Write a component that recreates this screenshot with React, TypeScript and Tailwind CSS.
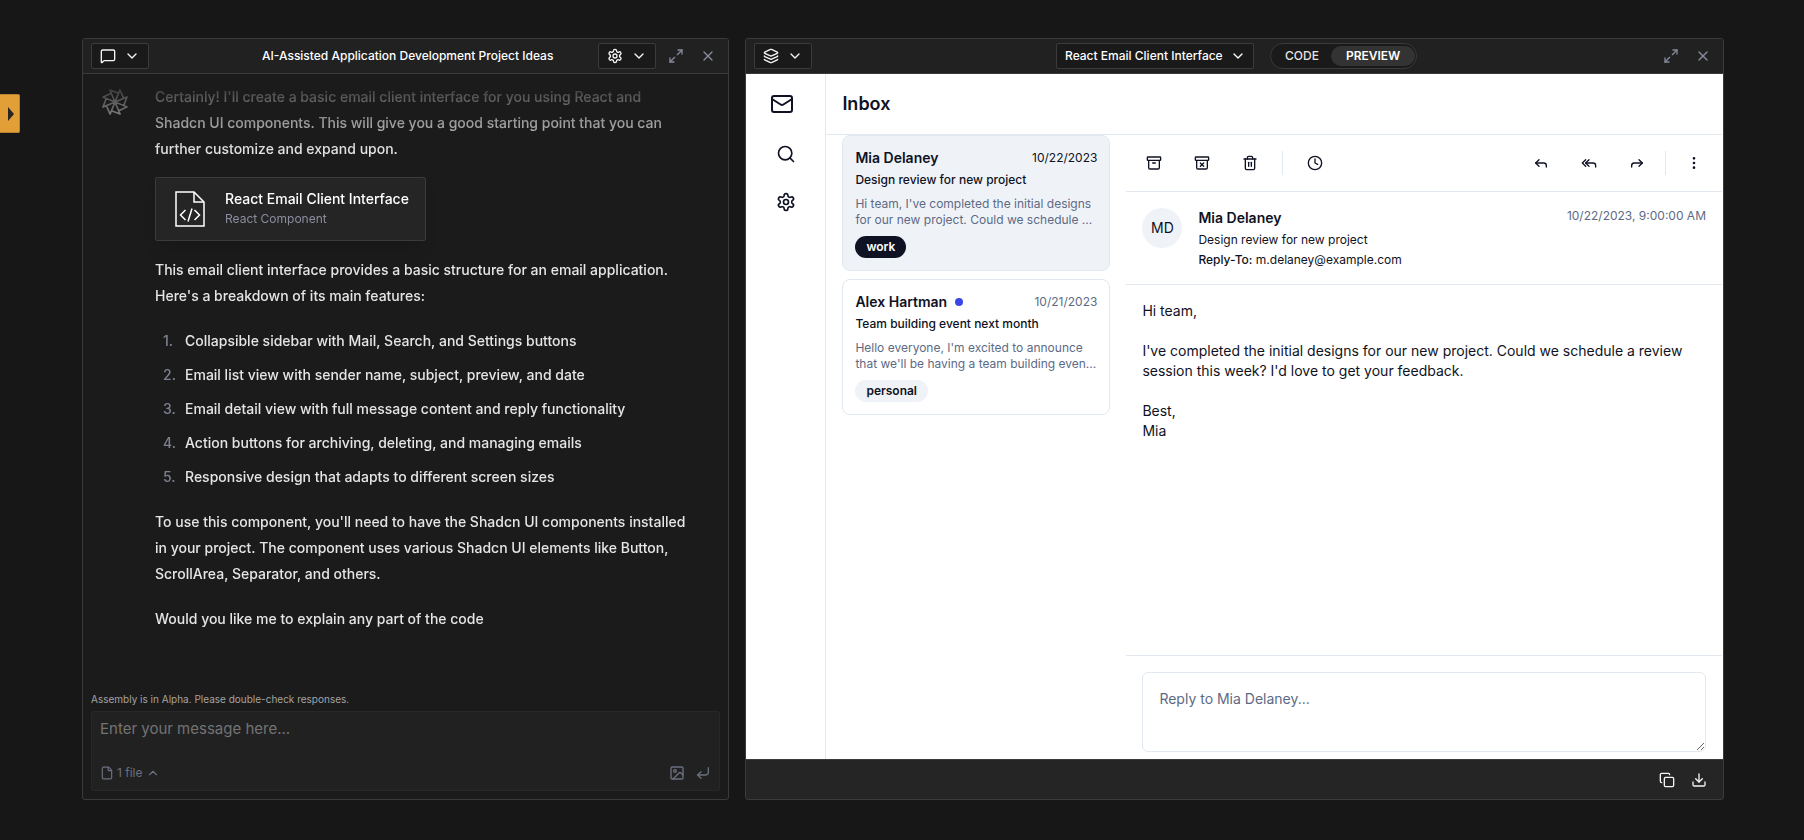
import React from "react";
import {
  Archive,
  ArchiveX,
  ChevronDown,
  ChevronUp,
  Clock,
  Copy,
  CornerDownLeft,
  Download,
  EllipsisVertical,
  File,
  Forward,
  Image,
  Layers,
  Mail,
  Maximize2,
  MessageSquare,
  Reply,
  ReplyAll,
  Search,
  Trash2,
  X,
} from "lucide-react";

const features = [
  "Collapsible sidebar with Mail, Search, and Settings buttons",
  "Email list view with sender name, subject, preview, and date",
  "Email detail view with full message content and reply functionality",
  "Action buttons for archiving, deleting, and managing emails",
  "Responsive design that adapts to different screen sizes",
];

const emails = [
  {
    name: "Mia Delaney",
    date: "10/22/2023",
    subject: "Design review for new project",
    preview: "Hi team, I've completed the initial designs for our new project. Could we schedule ...",
    label: "work",
    selected: true,
    unread: false,
  },
  {
    name: "Alex Hartman",
    date: "10/21/2023",
    subject: "Team building event next month",
    preview: "Hello everyone, I'm excited to announce that we'll be having a team building even...",
    label: "personal",
    selected: false,
    unread: true,
  },
];

function Gear({ className }: { className?: string }) {
  return (
    <svg
      viewBox="0 0 24 24"
      fill="none"
      stroke="currentColor"
      strokeWidth="2"
      strokeLinecap="round"
      strokeLinejoin="round"
      className={className}
      aria-hidden="true"
    >
      <path d="M12.22 2h-.44a2 2 0 0 0-2 2v.18a2 2 0 0 1-1 1.73l-.43.25a2 2 0 0 1-2 0l-.15-.08a2 2 0 0 0-2.73.73l-.22.38a2 2 0 0 0 .73 2.73l.15.1a2 2 0 0 1 1 1.72v.51a2 2 0 0 1-1 1.74l-.15.09a2 2 0 0 0-.73 2.73l.22.38a2 2 0 0 0 2.73.73l.15-.08a2 2 0 0 1 2 0l.43.25a2 2 0 0 1 1 1.73V20a2 2 0 0 0 2 2h.44a2 2 0 0 0 2-2v-.18a2 2 0 0 1 1-1.73l.43-.25a2 2 0 0 1 2 0l.15.08a2 2 0 0 0 2.73-.73l.22-.39a2 2 0 0 0-.73-2.73l-.15-.08a2 2 0 0 1-1-1.74v-.5a2 2 0 0 1 1-1.74l.15-.09a2 2 0 0 0 .73-2.73l-.22-.38a2 2 0 0 0-2.73-.73l-.15.08a2 2 0 0 1-2 0l-.43-.25a2 2 0 0 1-1-1.73V4a2 2 0 0 0-2-2z" />
      <circle cx="12" cy="12" r="3" />
    </svg>
  );
}

function Pinwheel() {
  const point = (radius: number, degrees: number) => {
    const a = (degrees * Math.PI) / 180;
    return `${(14 + radius * Math.cos(a)).toFixed(2)} ${(14 + radius * Math.sin(a)).toFixed(2)}`;
  };
  const d = Array.from({ length: 8 }, (_, i) => {
    const angle = i * 45 + 22;
    return `M14 14L${point(13, angle)}L${point(9.5, angle + 45)}`;
  }).join("");
  return (
    <svg
      viewBox="0 0 28 28"
      className="mt-1 size-7 shrink-0 text-neutral-300"
      fill="none"
      stroke="currentColor"
      strokeWidth="1.6"
      strokeLinejoin="round"
      aria-hidden="true"
    >
      <path d={d} />
    </svg>
  );
}

function MenuButton({ label, children }: { label: string; children: React.ReactNode }) {
  return (
    <button
      aria-label={label}
      className="flex h-[26px] w-[58px] items-center justify-between rounded-xs border border-[#3b3b3b] bg-[#1a1a1a] pl-2 pr-2 text-neutral-100"
    >
      {children}
      <ChevronDown className="size-4" />
    </button>
  );
}

function WindowButtons() {
  return (
    <>
      <button aria-label="Expand panel" className="grid size-8 place-items-center text-[#85899a]">
        <Maximize2 className="size-4" />
      </button>
      <button aria-label="Close panel" className="grid size-8 place-items-center text-[#85899a]">
        <X className="size-4" />
      </button>
    </>
  );
}

function ToolButton({ label, children }: { label: string; children: React.ReactNode }) {
  return (
    <button aria-label={label} className="grid size-10 place-items-center rounded-md [&>svg]:size-4">
      {children}
    </button>
  );
}

function ChatPanel() {
  return (
    <section className="flex min-h-0 flex-col overflow-hidden rounded-[3px] border border-[#3b3b3b] bg-[#1b1b1b]">
      <header className="grid h-[35px] shrink-0 grid-cols-[1fr_auto_1fr] items-center border-b border-[#3b3b3b] bg-[#212121] pl-2 pr-1">
        <MenuButton label="Chat menu">
          <MessageSquare className="size-4" />
        </MenuButton>
        <h1 className="text-xs font-medium text-white">AI-Assisted Application Development Project Ideas</h1>
        <div className="flex items-center justify-end">
          <div className="mr-1 flex">
            <MenuButton label="Chat settings">
              <Gear className="size-4" />
            </MenuButton>
          </div>
          <WindowButtons />
        </div>
      </header>

      <div className="flex min-h-0 flex-1 gap-[26px] overflow-hidden mask-[linear-gradient(to_bottom,transparent,black_78px)] pl-[18px] pr-6 pt-2.5 text-sm leading-[26px] font-medium text-[#e5e5e5]">
        <Pinwheel />
        <div className="min-w-0 flex-1">
          <p>
            Certainly! I'll create a basic email client interface for you using React and
            <br />
            Shadcn UI components. This will give you a good starting point that you can
            <br />
            further customize and expand upon.
          </p>
          <button className="mt-[15px] mb-4 flex h-16 items-center gap-5 rounded-xs border border-[#3b3b3b] bg-[#252525] pl-[19px] pr-4 text-left shadow-lg">
            <svg
              viewBox="0 0 30 36"
              className="h-9 w-[30px]"
              fill="none"
              stroke="white"
              strokeWidth="1.5"
              aria-hidden="true"
            >
              <path d="M1 1H19L29 11V35H1Z" />
              <path d="M19 1V11H29" />
              <path d="M10.500 19L5.500 24L10.500 29M19.500 19L24.500 24L19.500 29M17 17.500L13 30.500" />
            </svg>
            <span className="flex flex-col">
              <span className="text-sm leading-5 text-white">React Email Client Interface</span>
              <span className="text-xs leading-5 font-normal text-[#8b8d9f]">React Component</span>
            </span>
          </button>
          <div className="flex flex-col gap-[19px]">
            <p>
              This email client interface provides a basic structure for an email application.
              <br />
              Here's a breakdown of its main features:
            </p>
            <ol className="flex flex-col gap-2 pl-2">
              {features.map((feature, index) => (
                <li key={feature} className="flex">
                  <span className="w-[22px] shrink-0 text-[#7d8291]">{index + 1}.</span>
                  {feature}
                </li>
              ))}
            </ol>
            <p>
              To use this component, you'll need to have the Shadcn UI components installed
              <br />
              in your project. The component uses various Shadcn UI elements like Button,
              <br />
              ScrollArea, Separator, and others.
            </p>
            <p>Would you like me to explain any part of the code</p>
          </div>
        </div>
      </div>

      <footer className="shrink-0 px-2 pb-2">
        <p className="mb-1 text-[10px] leading-4 text-[#a3a3a3]">
          Assembly is in Alpha. Please double-check responses.
        </p>
        <div className="flex h-20 flex-col justify-between rounded-xs border border-[#282828] bg-[#212121] px-2 pt-[7px] pb-[5px]">
          <input
            aria-label="Message"
            placeholder="Enter your message here..."
            className="h-5 w-full bg-transparent text-[15px] text-white outline-none placeholder:text-[#737373]"
          />
          <div className="flex h-6 items-center justify-between text-[#6b7080]">
            <button className="flex items-center gap-[3px] text-xs">
              <File className="size-3.5" />
              1 file
              <ChevronUp className="size-3.5" />
            </button>
            <div className="flex items-center gap-2.5">
              <button aria-label="Attach image">
                <Image className="size-4" />
              </button>
              <button aria-label="Send message">
                <CornerDownLeft className="size-4" />
              </button>
            </div>
          </div>
        </div>
      </footer>
    </section>
  );
}

function EmailList() {
  return (
    <ul className="flex w-[300px] shrink-0 flex-col gap-2 px-4">
      {emails.map((email) => (
        <li key={email.name}>
          <button
            className={
              email.selected
                ? "w-full rounded-lg border border-slate-200 bg-[#eff3f8] p-3 text-left text-xs"
                : "w-full rounded-lg border border-slate-200 bg-white p-3 text-left text-xs"
            }
          >
            <span className="flex items-center gap-2">
              <span className="text-sm font-semibold">{email.name}</span>
              {email.unread && <span className="size-2 rounded-full bg-[#3c46e8]" />}
              <span className={email.selected ? "ml-auto" : "ml-auto text-[#5d6a85]"}>{email.date}</span>
            </span>
            <span className="mt-1 block font-medium">{email.subject}</span>
            <span className="mt-2 block text-[#5d6a85]">{email.preview}</span>
            <span
              className={
                email.selected
                  ? "mt-2 inline-block rounded-full border border-transparent bg-[#0f1223] px-2.5 py-0.5 font-semibold text-white"
                  : "mt-2 inline-block rounded-full border border-transparent bg-[#eff3f8] px-2.5 py-0.5 font-semibold"
              }
            >
              {email.label}
            </span>
          </button>
        </li>
      ))}
    </ul>
  );
}

function EmailDetail() {
  return (
    <article className="flex min-w-0 flex-1 flex-col">
      <div className="flex items-center justify-between border-b border-slate-200 p-2">
        <div className="flex items-center gap-2">
          <ToolButton label="Archive">
            <Archive />
          </ToolButton>
          <ToolButton label="Move to junk">
            <ArchiveX />
          </ToolButton>
          <ToolButton label="Delete">
            <Trash2 />
          </ToolButton>
          <span className="mx-1 h-6 w-px bg-slate-200" />
          <ToolButton label="Snooze">
            <Clock />
          </ToolButton>
        </div>
        <div className="flex items-center gap-2">
          <ToolButton label="Reply">
            <Reply />
          </ToolButton>
          <ToolButton label="Reply all">
            <ReplyAll />
          </ToolButton>
          <ToolButton label="Forward">
            <Forward />
          </ToolButton>
          <span className="h-6 w-px bg-slate-200" />
          <ToolButton label="More actions">
            <EllipsisVertical />
          </ToolButton>
        </div>
      </div>

      <div className="flex items-start gap-4 border-b border-slate-200 p-4">
        <span className="grid size-10 shrink-0 place-items-center rounded-full bg-[#eff3f8] text-sm">MD</span>
        <div className="flex flex-1 flex-col gap-1 text-xs">
          <h3 className="text-sm font-semibold">Mia Delaney</h3>
          <p>Design review for new project</p>
          <p>
            <span className="font-medium">Reply-To:</span> m.delaney@example.com
          </p>
        </div>
        <time className="text-xs text-[#5d6a85]">10/22/2023, 9:00:00 AM</time>
      </div>

      <div className="flex flex-1 flex-col gap-5 p-4 text-sm">
        <p>Hi team,</p>
        <p>
          I've completed the initial designs for our new project. Could we schedule a review session this week? I'd love
          to get your feedback.
        </p>
        <p>
          Best,
          <br />
          Mia
        </p>
      </div>

      <div className="border-t border-slate-200 px-4 pt-4 pb-[7px]">
        <textarea
          aria-label="Reply"
          placeholder="Reply to Mia Delaney..."
          className="block h-20 w-full rounded-md border border-slate-200 bg-white p-4 text-sm outline-none placeholder:text-[#5d6a85]"
        />
      </div>
    </article>
  );
}

function PreviewPanel() {
  return (
    <section className="flex min-h-0 flex-col overflow-hidden rounded-[3px] border border-[#3b3b3b] bg-[#252525]">
      <header className="grid h-[35px] shrink-0 grid-cols-[1fr_auto_1fr] items-center border-b border-[#3b3b3b] bg-[#212121] pl-2 pr-1">
        <MenuButton label="Layers menu">
          <Layers className="size-4" />
        </MenuButton>
        <div className="flex items-center gap-4">
          <div className="relative flex">
            <select
              aria-label="Artifact"
              className="h-[26px] w-[198px] appearance-none rounded-xs border border-[#3b3b3b] bg-[#1a1a1a] pl-2 pr-7 text-xs font-medium text-white outline-none"
            >
              <option>React Email Client Interface</option>
            </select>
            <ChevronDown className="pointer-events-none absolute top-[5px] right-2 size-4 text-white" />
          </div>
          <div className="flex h-[26px] items-center gap-3 rounded-full border border-[#3b3b3b] bg-[#1a1a1a] pl-3.5 pr-px text-xs">
            <button className="font-medium text-neutral-200">CODE</button>
            <button aria-pressed="true" className="h-5 rounded-full bg-[#333333] px-[15px] font-semibold text-white">
              PREVIEW
            </button>
          </div>
        </div>
        <div className="flex items-center justify-end">
          <WindowButtons />
        </div>
      </header>

      <div className="flex min-h-0 flex-1 overflow-hidden bg-white pr-px text-[#0f1223]">
        <nav className="flex w-20 shrink-0 flex-col border-r border-slate-200">
          <button aria-label="Mail" className="ml-4 mt-2.5 grid size-10 place-items-center">
            <Mail className="size-6" />
          </button>
          <button aria-label="Search" className="ml-5 mt-2.5 grid size-10 place-items-center">
            <Search className="size-5" />
          </button>
          <button aria-label="Settings" className="ml-5 mt-2 grid size-10 place-items-center">
            <Gear className="size-5" />
          </button>
        </nav>
        <div className="flex min-w-0 flex-1 flex-col">
          <h2 className="flex h-[61px] shrink-0 items-center border-b border-slate-200 px-4 text-lg font-semibold">
            Inbox
          </h2>
          <div className="flex min-h-0 flex-1">
            <EmailList />
            <EmailDetail />
          </div>
        </div>
      </div>

      <footer className="flex h-10 shrink-0 items-center justify-end gap-4 border-t border-[#3b3b3b] pr-4 text-neutral-100">
        <button aria-label="Copy code">
          <Copy className="size-4" />
        </button>
        <button aria-label="Download">
          <Download className="size-4" />
        </button>
      </footer>
    </section>
  );
}

export default function App() {
  return (
    <div className="relative grid h-screen min-h-[700px] grid-cols-[minmax(0,647fr)_minmax(0,978fr)] grid-rows-[minmax(0,1fr)] gap-4 bg-[#171717] pt-[38px] pr-20 pb-10 pl-[82px] font-['Inter',sans-serif]">
      <button
        aria-label="Open sidebar"
        className="absolute top-[94px] left-0 flex h-[39px] w-5 items-center justify-end rounded-r-xs border border-l-0 border-[#b8812d] bg-[#e29f37] pr-[5px]"
      >
        <svg viewBox="0 0 6 14" className="h-3.5 w-1.5" fill="#2a2520" aria-hidden="true">
          <path d="M0 0L6 7L0 14Z" />
        </svg>
      </button>
      <ChatPanel />
      <PreviewPanel />
    </div>
  );
}
